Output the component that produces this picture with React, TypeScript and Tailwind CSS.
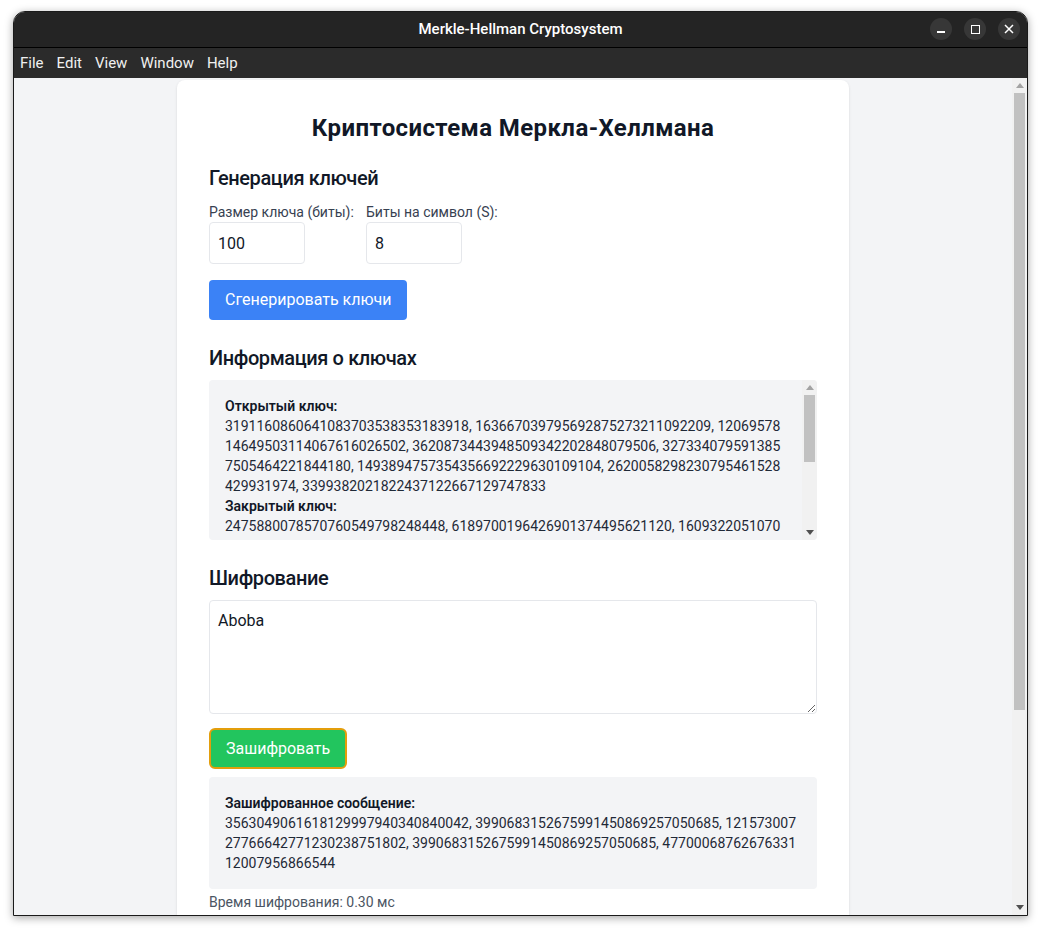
import React, { useState } from 'react';

const publicKeyLines = [
  '3191160860641083703538353183918, 163667039795692875273211092209, 12069578',
  '14649503114067616026502, 3620873443948509342202848079506, 327334079591385',
  '7505464221844180, 1493894757354356692229630109104, 2620058298230795461528',
  '429931974, 3399382021822437122667129747833',
];

const privateKeyLines = [
  '2475880078570760549798248448, 6189700196426901374495621120, 1609322051070',
];

const encryptedLines = [
  '3563049061618129997940340840042, 3990683152675991450869257050685, 121573007',
  '27766642771230238751802, 3990683152675991450869257050685, 47700068762676331',
  '12007956866544',
];

const WindowButton: React.FC<{ children: React.ReactNode }> = ({ children }) => (
  <div className="w-[22px] h-[22px] rounded-full bg-[#373737] flex items-center justify-center">
    {children}
  </div>
);

// classic scrollbar look, drawn by hand (headless chromium hides real ones)
const Scrollbar: React.FC<{ thumbClass: string }> = ({ thumbClass }) => (
  <div className="w-[15px] shrink-0 bg-[#f1f1f1] flex flex-col">
    <div className="h-[15px] flex items-center justify-center">
      <svg width="8" height="5" viewBox="0 0 8 5">
        <path d="M0 5L4 0L8 5Z" fill="#a3a3a3" />
      </svg>
    </div>
    <div className="flex-1 px-[2px]">
      <div className={thumbClass} />
    </div>
    <div className="h-[15px] flex items-center justify-center">
      <svg width="8" height="5" viewBox="0 0 8 5">
        <path d="M0 0L8 0L4 5Z" fill="#505050" />
      </svg>
    </div>
  </div>
);

const App: React.FC = () => {
  const [keySize, setKeySize] = useState('100');
  const [bits, setBits] = useState('8');
  const [message, setMessage] = useState('Aboba');

  return (
    <div className="w-[1041px] h-[933px] bg-white pt-[11px] pl-[13px] font-[family-name:Roboto,'Noto_Sans',sans-serif]">
      {/* window */}
      <div className="w-[1015px] h-[905px] rounded-t-[12px] overflow-hidden border border-[#1a1a1a] shadow-[0_2px_8px_rgba(0,0,0,0.35)] flex flex-col">
        {/* title bar */}
        <div className="h-[36px] bg-[#242424] border-b border-black flex items-center relative shrink-0">
          <div className="flex-1 text-center text-white text-[15px] font-medium">Merkle-Hellman Cryptosystem</div>
          <div className="absolute right-[7px] top-[6px] flex gap-[12px]">
            <WindowButton>
              <div className="w-[8px] h-[1.5px] bg-white mt-[6px]" />
            </WindowButton>
            <WindowButton>
              <div className="w-[9px] h-[9px] border-[1.5px] border-white" />
            </WindowButton>
            <WindowButton>
              <svg width="10" height="10" viewBox="0 0 10 10">
                <path d="M1 1L9 9M9 1L1 9" stroke="white" strokeWidth="1.5" />
              </svg>
            </WindowButton>
          </div>
        </div>
        {/* menu bar */}
        <div className="h-[30px] bg-[#2b2b2b] flex items-center gap-[13px] pl-[6px] text-[15px] text-[#f0f0f0] shrink-0">
          <span>File</span>
          <span>Edit</span>
          <span>View</span>
          <span>Window</span>
          <span>Help</span>
        </div>

        {/* content */}
        <div className="flex-1 flex min-h-0 bg-[#f3f4f6]">
          <div className="flex-1 overflow-hidden">
            <div className="max-w-2xl mx-auto mt-[2px] bg-white rounded-lg shadow-sm px-8 pt-8 pb-8">
              <h1 className="text-2xl font-bold text-center text-[#111827] tracking-[0.4px] mb-5">Криптосистема Меркла-Хеллмана</h1>

              {/* key generation */}
              <div className="mb-6">
                <h2 className="text-xl font-medium text-[#111827] tracking-[-0.4px] mb-2.5">Генерация ключей</h2>
                <div className="flex gap-4">
                  <div className="w-[141px] shrink-0">
                    <label className="block text-sm text-[#374151] whitespace-nowrap">Размер ключа (биты):</label>
                    <input
                      value={keySize}
                      onChange={e => setKeySize(e.target.value)}
                      className="w-24 h-[42px] px-2 border border-[#e5e7eb] rounded text-base text-[#111827] outline-none"
                    />
                  </div>
                  <div>
                    <label className="block text-sm text-[#374151] whitespace-nowrap">Биты на символ (S):</label>
                    <input
                      value={bits}
                      onChange={e => setBits(e.target.value)}
                      className="w-24 h-[42px] px-2 border border-[#e5e7eb] rounded text-base text-[#111827] outline-none"
                    />
                  </div>
                </div>
                <button className="mt-4 h-10 px-4 bg-[#3b82f6] text-white text-base rounded">Сгенерировать ключи</button>
              </div>

              {/* key info */}
              <div className="mb-6">
                <h2 className="text-xl font-medium text-[#111827] tracking-[-0.4px] mb-2">Информация о ключах</h2>
                <div className="h-40 bg-[#f3f4f6] rounded overflow-hidden flex">
                  <div className="flex-1 overflow-hidden pl-4 pr-1.5 pt-4 text-sm text-[#1f2937]">
                    <div className="font-semibold text-[#111827]">Открытый ключ:</div>
                    {publicKeyLines.map(line => (
                      <div key={line} className="whitespace-nowrap">{line}</div>
                    ))}
                    <div className="font-semibold text-[#111827]">Закрытый ключ:</div>
                    {privateKeyLines.map(line => (
                      <div key={line} className="whitespace-nowrap">{line}</div>
                    ))}
                  </div>
                  <Scrollbar thumbClass="h-[67px] bg-[#c1c1c1]" />
                </div>
              </div>

              {/* encryption */}
              <div>
                <h2 className="text-xl font-medium text-[#111827] tracking-[-0.4px] mb-2">Шифрование</h2>
                <textarea
                  rows={4}
                  value={message}
                  onChange={e => setMessage(e.target.value)}
                  className="block w-full h-[114px] p-2 border border-[#e5e7eb] rounded text-base text-[#111827] outline-none"
                />
                <button className="mt-[14px] h-[41px] px-[15px] bg-[#22c55e] text-white text-base rounded-md border-2 border-[#e39e0c]">
                  Зашифровать
                </button>
                <div className="mt-2 bg-[#f3f4f6] rounded p-4 text-sm text-[#1f2937]">
                  <div className="font-semibold text-[#111827]">Зашифрованное сообщение:</div>
                  {encryptedLines.map(line => (
                    <div key={line} className="whitespace-nowrap">{line}</div>
                  ))}
                </div>
                <div className="mt-[3px] text-sm text-[#4b5563]">Время шифрования: 0.30 мс</div>
              </div>
            </div>
          </div>
          <Scrollbar thumbClass="h-[617px] bg-[#c1c1c1]" />
        </div>
      </div>
    </div>
  );
};

export default App;
